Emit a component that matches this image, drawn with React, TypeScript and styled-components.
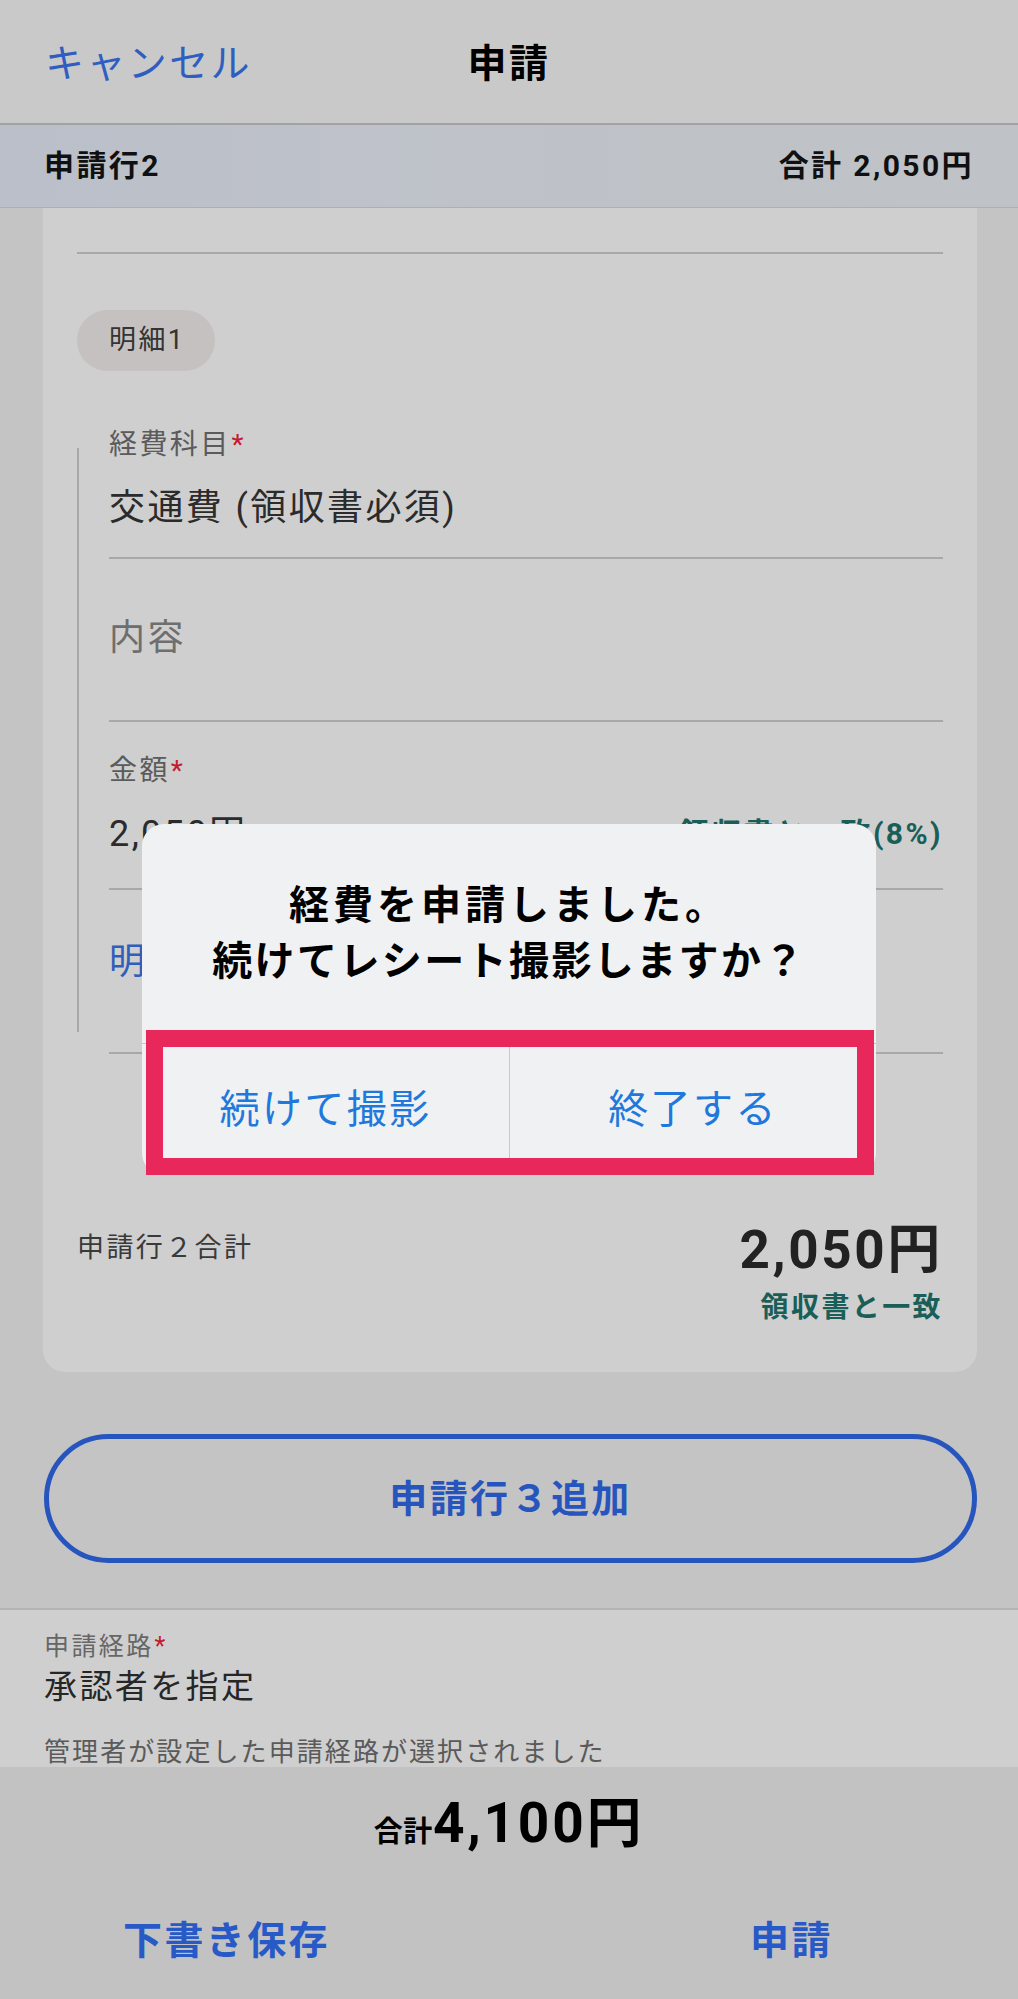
import React from "react";
import styled, { createGlobalStyle } from "styled-components";

const GlobalStyle = createGlobalStyle`
  html, body { margin: 0; padding: 0; }
  body {
    font-family: Roboto, "Noto Sans CJK JP", "Noto Sans", sans-serif;
    letter-spacing: 0.15em;
    background: #f3f2f2;
    -webkit-font-smoothing: antialiased;
  }
  * { box-sizing: border-box; }
  button { font-family: inherit; letter-spacing: inherit; cursor: pointer; }
`;

const Screen = styled.div`
  position: relative;
  height: 1999px;
  display: flex;
  flex-direction: column;
  overflow: hidden;
  background: #f3f2f2;
`;

const NavBar = styled.header`
  flex: none;
  height: 125px;
  display: grid;
  grid-template-columns: 1fr auto 1fr;
  align-items: center;
  padding: 4px 45px 0;
  background: #f8f8f8;
  border-bottom: 2px solid #c8c8c8;
`;

const NavCancel = styled.button`
  justify-self: start;
  border: none;
  background: none;
  padding: 0;
  font-size: 39px;
  line-height: 48px;
  color: #3b74ee;
`;

const NavTitle = styled.h1`
  margin: 0;
  font-size: 39px;
  line-height: 48px;
  font-weight: 700;
  color: #000;
`;

const SectionBar = styled.div`
  flex: none;
  height: 83px;
  display: flex;
  align-items: center;
  justify-content: space-between;
  padding: 0 44px;
  background: linear-gradient(90deg, #e6ecf8 0%, #ebeff8 40%, #eceff5 100%);
  border-bottom: 1px solid #d4d8e0;
  font-size: 30px;
  line-height: 36px;
  font-weight: 700;
  color: #141414;
`;

const Scroll = styled.main`
  flex: 1;
  min-height: 0;
  overflow: hidden;
  display: flex;
  flex-direction: column;
`;

const Card = styled.section`
  flex: none;
  margin: 0 41px 0 43px;
  background: #fff;
  border-radius: 0 0 22px 22px;
  padding: 44px 34px 46px;
  display: flex;
  flex-direction: column;
`;

const Rule = styled.div<{ $top?: number; $left?: number }>`
  height: 2px;
  margin-top: ${(p) => p.$top ?? 0}px;
  margin-left: ${(p) => p.$left ?? 0}px;
  background: #cfcfcf;
`;

const Chip = styled.span`
  align-self: flex-start;
  display: inline-flex;
  align-items: center;
  height: 61px;
  margin-top: 56px;
  padding: 0 30px 0 32px;
  border-radius: 31px;
  background: #f3eeee;
  color: #404040;
  font-size: 27px;
  line-height: 1;
`;

const Detail = styled.div`
  position: relative;
  margin-top: 57px;
  padding: 0 0 48px 32px;

  &::before {
    content: "";
    position: absolute;
    left: 0;
    top: 20px;
    bottom: 0;
    width: 2px;
    background: #cfcfcf;
  }
`;

const Field = styled.div<{ $pt: number; $pb: number }>`
  padding: ${(p) => p.$pt}px 0 ${(p) => p.$pb}px;
  border-bottom: 2px solid #cfcfcf;
`;

const Label = styled.div`
  font-size: 28px;
  line-height: 34px;
  color: #717171;
`;

const Req = styled.span`
  color: #f0243a;
  margin-left: 1px;
`;

const ValueRow = styled.div`
  margin-top: 24px;
  display: flex;
  align-items: center;
  justify-content: space-between;
`;

const Value = styled.div<{ $muted?: boolean }>`
  font-size: 36px;
  line-height: 44px;
  color: ${(p) => (p.$muted ? "#888888" : "#353535")};
`;

const Match = styled.span`
  font-size: 30px;
  line-height: 44px;
  font-weight: 700;
  color: #1f756c;
`;

const AddDetail = styled.button`
  display: block;
  margin-top: 50px;
  padding: 0;
  border: none;
  background: none;
  font-size: 36px;
  line-height: 44px;
  color: #3c74e6;
`;

const TotalRow = styled.div`
  margin-top: 166px;
  display: flex;
  align-items: flex-start;
  justify-content: space-between;
`;

const TotalLabel = styled.div`
  margin-top: 11px;
  font-size: 27px;
  line-height: 34px;
  color: #484848;
`;

const TotalRight = styled.div`
  display: flex;
  flex-direction: column;
  align-items: flex-end;
`;

const TotalAmount = styled.div`
  font-size: 53px;
  line-height: 60px;
  font-weight: 700;
  letter-spacing: 0.05em;
  color: #2a2a2a;
`;

const TotalMatch = styled.div`
  margin-top: 10px;
  font-size: 28px;
  line-height: 36px;
  font-weight: 700;
  color: #1f756c;
`;

const AddRowButton = styled.button`
  flex: none;
  height: 129px;
  margin: 62px 41px 0 44px;
  border: 5px solid #3169ea;
  border-radius: 65px;
  background: transparent;
  font-size: 38px;
  line-height: 48px;
  font-weight: 700;
  color: #3169ea;
`;

const Route = styled.section`
  flex: 1 0 auto;
  margin-top: 45px;
  padding: 21px 44px 0;
  background: #fff;
  border-top: 2px solid #dedede;
`;

const RouteLabel = styled.div`
  font-size: 25px;
  line-height: 32px;
  color: #7e7e7e;
`;

const RouteValue = styled.div`
  margin-top: 4px;
  font-size: 33px;
  line-height: 40px;
  color: #2f2f2f;
`;

const RouteNote = styled.div`
  margin-top: 28px;
  font-size: 26px;
  line-height: 34px;
  letter-spacing: 0.08em;
  color: #6f6f6f;
`;

const BottomBar = styled.footer`
  flex: none;
  height: 232px;
  padding-top: 26px;
  background: #efefef;
  display: flex;
  flex-direction: column;
  align-items: center;
`;

const GrandTotal = styled.div`
  display: flex;
  align-items: baseline;
  line-height: 60px;
  font-weight: 700;
  color: #000;
`;

const GrandLabel = styled.span`
  font-size: 29px;
  letter-spacing: 0.02em;
`;

const GrandValue = styled.span`
  font-size: 55px;
  letter-spacing: 0.05em;
`;

const Actions = styled.div`
  margin-top: 54px;
  width: 100%;
  display: grid;
  grid-template-columns: 453px 453px;
  column-gap: 112px;
`;

const ActionButton = styled.button`
  justify-self: center;
  padding: 0;
  border: none;
  background: none;
  font-size: 39px;
  line-height: 50px;
  font-weight: 700;
  color: #316ff6;
`;

const Backdrop = styled.div`
  position: absolute;
  inset: 0;
  background: rgba(0, 0, 0, 0.188);
  display: flex;
  align-items: center;
  justify-content: center;
`;

const Alert = styled.div`
  position: relative;
  width: 734px;
  height: 351px;
  background: #f0f1f3;
  border-radius: 22px;
  display: flex;
  flex-direction: column;
`;

const AlertMessage = styled.div`
  flex: none;
  height: 219px;
  padding: 54px 10px 0;
  text-align: center;
  font-size: 40px;
  line-height: 56px;
  font-weight: 700;
  color: #000;
`;

const AlertLine = styled.span<{ $tight?: boolean }>`
  display: block;
  letter-spacing: ${(p) => (p.$tight ? "0.1em" : "inherit")};
`;

const AlertActions = styled.div`
  flex: 1;
  display: grid;
  grid-template-columns: 1fr 1fr;
  border-top: 1px solid #c8c8cc;
`;

const AlertButton = styled.button<{ $divider?: boolean }>`
  border: none;
  border-left: ${(p) => (p.$divider ? "1px solid #c8c8cc" : "none")};
  background: none;
  padding: 0;
  font-size: 40px;
  line-height: 48px;
  color: #2178dc;
`;

const Highlight = styled.div`
  position: absolute;
  left: 4px;
  right: 2px;
  top: 206px;
  bottom: 0;
  border: 17px solid #e8285a;
  pointer-events: none;
`;

export default function App() {
  return (
    <>
      <GlobalStyle />
      <Screen>
        <NavBar>
          <NavCancel>キャンセル</NavCancel>
          <NavTitle>申請</NavTitle>
          <span />
        </NavBar>
        <SectionBar>
          <span>申請行2</span>
          <span>合計 2,050円</span>
        </SectionBar>
        <Scroll>
          <Card>
            <Rule />
            <Chip>明細1</Chip>
            <Detail>
              <Field $pt={0} $pb={27}>
                <Label>
                  経費科目<Req>*</Req>
                </Label>
                <ValueRow>
                  <Value>交通費 (領収書必須)</Value>
                </ValueRow>
              </Field>
              <Field $pt={57} $pb={60}>
                <Value $muted>内容</Value>
              </Field>
              <Field $pt={32} $pb={32}>
                <Label>
                  金額<Req>*</Req>
                </Label>
                <ValueRow>
                  <Value>2,050円</Value>
                  <Match>領収書と一致(8%)</Match>
                </ValueRow>
              </Field>
              <AddDetail>明細2追加</AddDetail>
            </Detail>
            <Rule $top={20} $left={32} />
            <TotalRow>
              <TotalLabel>申請行２合計</TotalLabel>
              <TotalRight>
                <TotalAmount>2,050円</TotalAmount>
                <TotalMatch>領収書と一致</TotalMatch>
              </TotalRight>
            </TotalRow>
          </Card>
          <AddRowButton>申請行３追加</AddRowButton>
          <Route>
            <RouteLabel>
              申請経路<Req>*</Req>
            </RouteLabel>
            <RouteValue>承認者を指定</RouteValue>
            <RouteNote>管理者が設定した申請経路が選択されました</RouteNote>
          </Route>
        </Scroll>
        <BottomBar>
          <GrandTotal>
            <GrandLabel>合計</GrandLabel>
            <GrandValue>4,100円</GrandValue>
          </GrandTotal>
          <Actions>
            <ActionButton>下書き保存</ActionButton>
            <ActionButton>申請</ActionButton>
          </Actions>
        </BottomBar>
        <Backdrop>
          <Alert>
            <AlertMessage>
              <AlertLine $tight>経費を申請しました。</AlertLine>
              <AlertLine>続けてレシート撮影しますか？</AlertLine>
            </AlertMessage>
            <AlertActions>
              <AlertButton>続けて撮影</AlertButton>
              <AlertButton $divider>終了する</AlertButton>
            </AlertActions>
            <Highlight />
          </Alert>
        </Backdrop>
      </Screen>
    </>
  );
}
